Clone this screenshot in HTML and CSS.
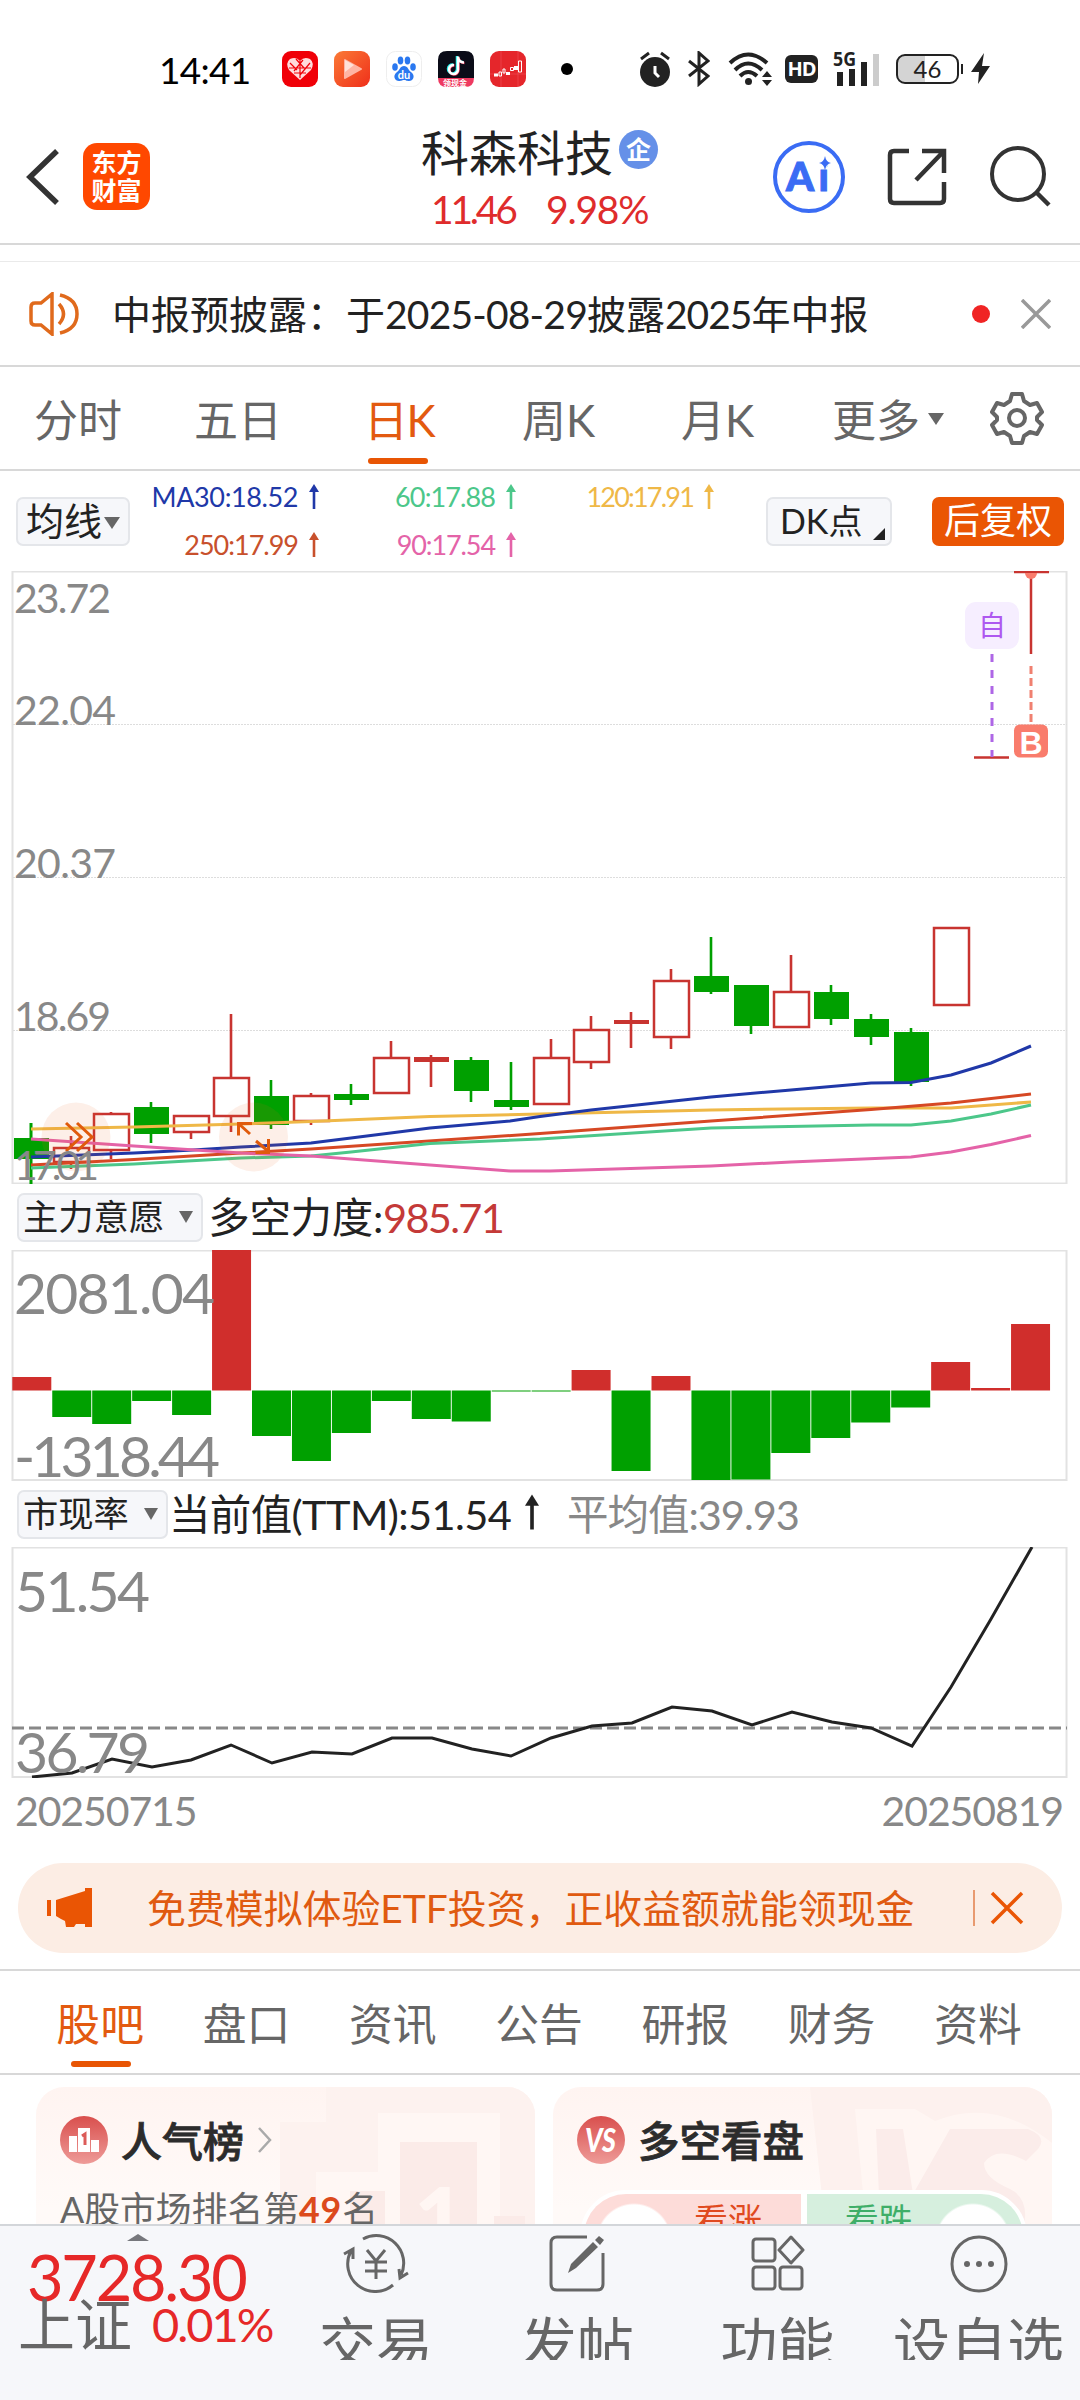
FILE: index.html
```html
<!DOCTYPE html>
<html lang="zh-CN">
<head>
    <meta charset="UTF-8">
    <meta name="viewport" content="width=device-width, initial-scale=1.0">
    <title>科森科技</title>
    <link rel="stylesheet" href="styles.css">
</head>
<body>
    <div class="status-bar">
        <span class="clock">14:41</span>
        <div class="app-icons">
            <svg width="36" height="36" viewBox="0 0 36 36"><rect width="36" height="36" rx="9" fill="#f00008"/><path d="M18 29 L7 19 Q3 12 8 8 Q14 5 18 10 Q22 5 28 8 Q33 12 29 19 Z" fill="#ffdcdc"/><path d="M8 12l7 7M14 8l8 9M21 9l-9 11M28 12l-10 12M12 22h12M7 17h22M18 10v17" stroke="#f00008" stroke-width="1.2"/></svg>
            <svg width="36" height="36" viewBox="0 0 36 36"><defs><linearGradient id="g1" x1="0" y1="0" x2="1" y2="1"><stop offset="0" stop-color="#fb7a36"/><stop offset="1" stop-color="#ef2f1a"/></linearGradient></defs><rect width="36" height="36" rx="9" fill="url(#g1)"/><path d="M11 9 L27 18 L11 27 Z" fill="#ffb5a4" stroke="#ffb5a4" stroke-width="2" stroke-linejoin="round"/><path d="M11 9 L20 14 L11 21 Z" fill="#ffe1d8"/></svg>
            <svg width="36" height="36" viewBox="0 0 36 36"><rect x=".5" y=".5" width="35" height="35" rx="9" fill="#fff" stroke="#eee"/><g fill="#2a78f0"><ellipse cx="9" cy="16" rx="2.800" ry="3.800"/><ellipse cx="14.500" cy="9.500" rx="2.800" ry="4"/><ellipse cx="21.500" cy="9.500" rx="2.800" ry="4"/><ellipse cx="27" cy="16" rx="2.800" ry="3.800"/><path d="M18 15c4 0 4 4 7 6 5 4 2 9-2 9-3 0-3-1-5-1s-2 1-5 1c-4 0-7-5-2-9 3-2 3-6 7-6z"/></g><text x="18" y="28" class="du">du</text></svg>
            <svg width="36" height="36" viewBox="0 0 36 36"><path d="M9 0h18q9 0 9 9v18h-36v-18q0-9 9-9z" fill="#0b0c18"/><path d="M0 27h36q0 9-9 9h-18q-9 0-9-9z" fill="#ee3960"/><path d="M19 5v13a4.500 4.500 0 1 1-4-4.500M19 6c1 4 3 5 6 5" fill="none" stroke="#25f4ee" stroke-width="2.500"/><path d="M20.500 6v13a4.500 4.500 0 1 1-4-4.500M20.500 7c1 4 3 5 6 5" fill="none" stroke="#f03a5c" stroke-width="2.500"/><path d="M20 5.500v13a4.500 4.500 0 1 1-4-4.500M20 6.500c1 4 3 5 6 5" fill="none" stroke="#fff" stroke-width="2.500"/><text x="17" y="34.500" class="cash">领现金</text></svg>
            <svg width="36" height="36" viewBox="0 0 36 36"><rect width="36" height="36" rx="9" fill="#e5262b"/><path d="M11 0v36M0 23h36M28 0v36" stroke="#ef5357" stroke-width=".6"/><path d="M4 22.500h4v3h-4z M16 21h4v3h-4z M24 15h4v4h-4z" fill="#fff"/><path d="M9 21h2.500v4h-2.500z M13 18h2v4h-2z M20.500 16.500h3v3h-3z M28.500 10h3v11h-3z" fill="none" stroke="#fff" stroke-width="1"/></svg>
        </div>
        <span class="dot"></span>
        <svg class="alarm" width="32" height="36" viewBox="0 0 32 36"><circle cx="16" cy="21" r="15" fill="#222"/><path d="M16 15v7l4 4" fill="none" stroke="#fff" stroke-width="3"/><path d="M2 8l8-6M30 8l-8-6" stroke="#222" stroke-width="3"/></svg>
        <svg class="bluetooth" width="22" height="36" viewBox="0 0 22 36"><path d="M1 10l19 15-9 8v-31l9 8-19 15" fill="none" stroke="#222" stroke-width="3"/></svg>
        <svg class="wifi" width="44" height="36" viewBox="0 0 44 36"><g fill="none" stroke="#222" stroke-width="4"><path d="M2 12q18-17 37 0"/><path d="M7 19q13-13 27 0"/><path d="M12 25q8-8 17 0"/></g><circle cx="20.500" cy="30.500" r="3.500" fill="#222"/><path d="M39 20l5 6h-10zM39 35l-5-6h10z" fill="#222"/></svg>
        <span class="hd">HD</span>
        <svg class="signal" width="48" height="36" viewBox="0 0 48 36"><text x="0" y="15" class="five-g" textLength="23" lengthAdjust="spacingAndGlyphs">5G</text><path d="M7 21v14M19 18v17M31 11v24" stroke="#222" stroke-width="6"/><path d="M43 3v32" stroke="#ccc" stroke-width="6"/></svg>
        <span class="battery">46</span>
        <svg class="bolt" width="22" height="32" viewBox="0 0 22 32"><path d="M14 0L1 19h8l-1 12 12-18h-8z" fill="#222"/></svg>
    </div>

    <div class="header">
        <svg width="34" height="56" viewBox="0 0 34 56"><path d="M31 2L4 28l27 26" fill="none" stroke="#333" stroke-width="5.500"/></svg>
        <div class="logo">东方<br>财富</div>
        <div class="stock">
            <div class="name">科森科技<span class="badge">企</span></div>
            <div class="price"><span class="last-price">11.46</span><span>9.98%</span></div>
        </div>
        <div class="tools">
            <svg width="72" height="72" viewBox="0 0 72 72"><circle cx="36" cy="36" r="34" fill="none" stroke="#3a6cf4" stroke-width="4"/><text x="13" y="50" class="ai" textLength="43">Ai</text><circle cx="50" cy="23" r="5" fill="#fff"/><path d="M52 15q1 6 6 7q-5 1-6 7q-1-6-6-7q5-1 6-7z" fill="#3a6cf4"/></svg>
            <svg width="60" height="60" viewBox="0 0 60 60"><path d="M22 4h-15q-4 0-4 4v44q0 4 4 4h46q4 0 4-4v-17M29 33L56 5M35 4h22v22" fill="none" stroke="#333" stroke-width="4.500"/></svg>
            <svg width="62" height="62" viewBox="0 0 62 62"><circle cx="29" cy="28" r="26" fill="none" stroke="#333" stroke-width="4"/><path d="M47 46l13 13" stroke="#333" stroke-width="4.500"/></svg>
        </div>
    </div>

    <div class="notice">
        <svg width="52" height="44" viewBox="0 0 52 44"><g fill="none" stroke="#e06a1c" stroke-width="3.500"><path d="M24 2v40L13 33h-6q-4 0-4-4v-14q0-4 4-4h6z"/><path d="M31 12q9 10 0 20M32 3q17 4 17 19t-17 19"/></g></svg>
        <span class="notice-text">中报预披露：于<span class="n-date">2025-08-29</span>披露<span class="n-year">2025</span>年中报</span>
        <span class="red-dot"></span>
        <svg width="30" height="30" viewBox="0 0 30 30"><path d="M1 1l28 28M29 1L1 29" stroke="#999" stroke-width="3.500"/></svg>
    </div>

    <div class="period-tabs">
        <span>分时</span><span>五日</span><span class="active">日K</span><span>周K</span><span>月K</span><span>更多<i class="caret"></i></span>
        <svg width="54" height="54" viewBox="0 0 54 54"><path d="M22 3h10l2 7 6 4 7-2 5 9-5 5v3l5 5-5 9-7-2-6 4-2 7h-10l-2-7-6-4-7 2-5-9 5-5v-3l-5-5 5-9 7 2 6-4z" fill="none" stroke="#666" stroke-width="4" stroke-linejoin="round"/><circle cx="27" cy="27" r="8" fill="none" stroke="#666" stroke-width="4"/></svg>
    </div>

    <div class="ma-row">
        <div class="select">均线<i class="caret"></i></div>
        <div class="ma-list">
            <span class="ma30">MA30:18.52<svg class="up"><use href="#up"/></svg></span>
            <span class="ma60">60:17.88<svg class="up"><use href="#up"/></svg></span>
            <span class="ma120">120:17.91<svg class="up"><use href="#up"/></svg></span>
            <span class="ma250">250:17.99<svg class="up"><use href="#up"/></svg></span>
            <span class="ma90">90:17.54<svg class="up"><use href="#up"/></svg></span>
        </div>
        <div class="dk">DK点</div>
        <div class="fq">后复权</div>
    </div>
    <svg class="symbols"><symbol id="up" viewBox="0 0 10 25"><path d="M5 25V4" stroke="currentColor" stroke-width="2.600"/><path d="M5 0l5 8h-10z" fill="currentColor"/></symbol></svg>

    <svg class="chart k-chart" viewBox="0 571 1080 613">
        <rect x="12.500" y="571.500" width="1054" height="612" class="frame"/>
        <path d="M13 724.500H1067M13 877.500H1067M13 1030.500H1067" class="grid"/>
        <g id="candles"></g>
        <g id="ma-lines"></g>
        <circle cx="76" cy="1137" r="34.500" class="hint"/>
        <circle cx="253.500" cy="1137" r="34.500" class="hint"/>
        <path d="M66 1123l15 14-15 14M77 1123l15 14-15 14" class="hint-icon"/>
        <path d="M252 1123.500h-13.500v12M239 1124l11 10M256 1141l12 10M268.500 1139v13.500h-13" class="hint-icon"/>
        <path d="M974 757.500h35M1014 572h35M1031 572v82" class="last"/>
        <path d="M1025 573a6 6 0 0 0 12 0z" fill="#f97c6c"/>
        <path d="M992 654V757" class="dash-purple"/>
        <path d="M1031 666V722" class="dash-red"/>
        <rect x="965" y="602" width="54" height="47" rx="11" fill="#f6eeff"/>
        <text x="978" y="636" class="zi">自</text>
        <rect x="1014" y="724.500" width="34" height="33" rx="6" fill="#f97c6c"/>
        <text x="1031" y="753.500" class="buy">B</text>
        <g class="axis">
            <text x="14" y="613" textLength="97">23.72</text>
            <text x="14" y="725" textLength="102">22.04</text>
            <text x="14" y="878" textLength="102">20.37</text>
            <text x="14" y="1031" textLength="97">18.69</text>
            <text x="14" y="1180" textLength="85">17.01</text>
        </g>
    </svg>

    <div class="sub-row">
        <div class="select small">主力意愿<i class="caret"></i></div>
        <span class="value">多空力度:<b class="num-red">985.71</b></span>
    </div>
    <svg class="chart sub-chart" viewBox="0 1250 1080 231">
        <rect x="12.500" y="1250.500" width="1054" height="229.500" class="frame"/>
        <g id="bars"></g>
        <g class="axis big">
            <text x="14" y="1314" textLength="201">2081.04</text>
            <text x="14" y="1477" textLength="206">-1318.44</text>
        </g>
    </svg>

    <div class="sub-row">
        <div class="select small">市现率<i class="caret"></i></div>
        <span class="value ttm">当前值(TTM):51.54<svg class="up"><use href="#up"/></svg></span>
        <span class="value avg">平均值:39.93</span>
    </div>
    <svg class="chart sub-chart" viewBox="0 1547 1080 231">
        <rect x="12.500" y="1547.500" width="1054" height="229.500" class="frame"/>
        <path d="M12 1728H1067" class="avg-line"/>
        <polyline points="32,1777 72,1773 112,1759 152,1767 191,1760 231,1745 272,1763 312,1752 352,1754 392,1738 432,1738 472,1749 511,1756 551,1738 592,1726 632,1723 672,1707 712,1711 752,1725 792,1712 832,1722 871,1728 912,1746 951,1687 991,1619 1032,1547" class="ttm-line"/>
        <g class="axis big">
            <text x="15" y="1612" textLength="135">51.54</text>
            <text x="15" y="1773" textLength="135">36.79</text>
        </g>
    </svg>
    <div class="dates"><span>20250715</span><span>20250819</span></div>

    <div class="banner">
        <svg width="46" height="40" viewBox="0 0 46 40"><path d="M9 12L38 3V0h7v39h-7v-3h-9l-2 3h-8l-1-6-4-2-5-3z" fill="#ea5504"/><path d="M2 12v16" stroke="#ea5504" stroke-width="4"/></svg>
        <span class="banner-text">免费模拟体验ETF投资，正收益额就能领现金</span>
        <i class="divider"></i>
        <svg width="34" height="34" viewBox="0 0 34 34"><path d="M2 2l30 30M32 2L2 32" stroke="#ea5504" stroke-width="3.500"/></svg>
    </div>

    <div class="info-tabs">
        <span class="active">股吧</span><span>盘口</span><span>资讯</span><span>公告</span><span>研报</span><span>财务</span><span>资料</span>
    </div>

    <div class="cards">
        <div class="card">
            <svg class="decor" viewBox="0 0 499 200"><path d="M290 0h209v200h-255v-165h46z" fill="#fdf2ef"/><path d="M342 26h122v174h-184v-115h62z" fill="#fff7f4"/><path d="M364 55h77v145h-77zM314 104h35v96h-35zM458 129h31v71h-31z" fill="#fbebe8"/><text x="378" y="165" class="one">1</text></svg>
            <div class="card-title">
                <svg width="48" height="48" viewBox="0 0 48 48"><use href="#disc"/><path d="M9 20h8v16h-8zM18 12h12v24h-12zM31 24h8v12h-8z" fill="#fff"/><path d="M22 20l3-2v11" fill="none" stroke="#dc5c59" stroke-width="3"/></svg>
                <span>人气榜</span>
                <svg width="14" height="26" viewBox="0 0 14 26"><path d="M1 1l11 12L1 25" fill="none" stroke="#aaa" stroke-width="2.500"/></svg>
            </div>
            <div class="rank">A股市场排名第<b>49</b>名</div>
        </div>
        <div class="card">
            <svg class="decor" viewBox="0 0 499 200"><path d="M257 0h242v200h-220z" fill="#fdf1ee"/><path d="M302 22h60l20 12q60-24 117 22v144h-180z" fill="#fff6f3"/><path d="M323 42h27l10 65 37-65h78q20 8 10 20l-12 12q-30-16-42 2 0 15 26 26 24 12 10 50h-92l-5-25-10 25h-32z" fill="#fbecea"/></svg>
            <div class="card-title">
                <svg width="48" height="48" viewBox="0 0 48 48"><use href="#disc"/><text x="8" y="36" class="vs" textLength="31" lengthAdjust="spacingAndGlyphs">VS</text></svg>
                <span class="wide">多空看盘</span>
            </div>
            <div class="vote"><div class="bull">看涨</div><div class="bear">看跌</div></div>
        </div>
    </div>
    <svg class="symbols"><defs><linearGradient id="g2" x1="0" y1="0" x2="0" y2="1"><stop offset="0" stop-color="#d94f4d"/><stop offset="1" stop-color="#ee9b98"/></linearGradient></defs><symbol id="disc" viewBox="0 0 48 48"><circle cx="24" cy="24" r="24" fill="url(#g2)"/></symbol></svg>

    <div class="bottom-bar">
        <div class="index">
            <i class="tri"></i>
            <div class="points">3728.30</div>
            <div class="change"><span class="sh">上证</span><span class="pct">0.01%</span></div>
        </div>
        <div class="nav">
            <svg width="66" height="60" viewBox="0 0 66 60"><g fill="none" stroke="#666" stroke-width="3"><path d="M20 6A27.500 27.500 0 0 1 58 42M56 36l1 9 8-5M50 52A27.500 27.500 0 0 1 8 18M1 21l9-5v10"/><path d="M24 17l9 11 9-11M33 28v18M22 29h22M22 38h22"/></g></svg>
            <span>交易</span>
        </div>
        <div class="nav">
            <svg width="58" height="60" viewBox="0 0 58 60"><path d="M39 4H9q-6 0-6 6v41q0 6 6 6h40q6 0 6-6V20" fill="none" stroke="#666" stroke-width="3"/><path d="M20 40l3-9L45 9l5 5L28 35zM47 7l4-4 5 4-4 5z" fill="#666"/></svg>
            <span>发帖</span>
        </div>
        <div class="nav">
            <svg width="54" height="60" viewBox="0 0 54 60"><g fill="none" stroke="#666" stroke-width="3"><rect x="2" y="6" width="22" height="22" rx="3"/><path d="M40 4l12 13-12 13-12-13z" stroke-linejoin="round"/><rect x="2" y="34" width="22" height="22" rx="3"/><rect x="29" y="34" width="22" height="22" rx="3"/></g></svg>
            <span>功能</span>
        </div>
        <div class="nav">
            <svg width="60" height="60" viewBox="0 0 60 60"><circle cx="30" cy="31" r="27" fill="none" stroke="#666" stroke-width="3"/><g fill="#666"><circle cx="18" cy="31" r="3"/><circle cx="30" cy="31" r="3"/><circle cx="42" cy="31" r="3"/></g></svg>
            <span>设自选</span>
        </div>
    </div>

    <script>
        const NS = 'http://www.w3.org/2000/svg';
        const RED = '#c83430';
        const GREEN = '#00a000';

        function add(parent, tag, attrs) {
            const el = document.createElementNS(NS, tag);
            for (const key in attrs) el.setAttribute(key, attrs[key]);
            parent.appendChild(el);
        }

        // [up, high, top, bottom, low]
        const candles = [
            [0, 1123, 1138, 1159, 1184], [1, 1136, 1147, 1163, 1169], [1, 1112, 1113, 1151, 1159],
            [0, 1102, 1107, 1134, 1143], [1, 1115, 1115, 1133, 1139], [1, 1014, 1077, 1117, 1132],
            [0, 1080, 1096, 1125, 1129], [1, 1093, 1095, 1122, 1125], [0, 1084, 1094, 1100, 1105],
            [1, 1041, 1057, 1094, 1094], [1, 1055, 1057, 1062, 1087], [0, 1057, 1060, 1091, 1102],
            [0, 1062, 1100, 1107, 1110], [1, 1039, 1057, 1105, 1105], [1, 1016, 1029, 1063, 1069],
            [1, 1012, 1020, 1024, 1048], [1, 969, 980, 1038, 1049], [0, 937, 976, 992, 994],
            [0, 985, 985, 1026, 1034], [1, 955, 991, 1028, 1028], [0, 985, 992, 1019, 1025],
            [0, 1014, 1019, 1037, 1045], [0, 1028, 1032, 1082, 1086], [1, 927, 927, 1006, 1006]
        ];
        const candleBox = document.getElementById('candles');
        candles.forEach(([up, high, top, bottom, low], i) => {
            const x = 31 + i * 40;
            const color = up ? RED : GREEN;
            add(candleBox, 'path', { d: `M${x} ${high}V${top}M${x} ${bottom}V${low}`, stroke: color, 'stroke-width': 2.6 });
            if (up && bottom - top > 6) {
                add(candleBox, 'rect', { x: x - 17, y: top + 1, width: 35, height: bottom - top - 2, fill: 'none', stroke: color, 'stroke-width': 2.5 });
            } else {
                add(candleBox, 'rect', { x: x - 17, y: top, width: 35, height: bottom - top, fill: color });
            }
        });
        add(candleBox, 'path', { d: 'M31 1123V1184', stroke: GREEN, 'stroke-width': 2.6 });

        const lines = {
            '#efb847': '31,1129 134,1127 241,1124 311,1121.5 430,1116.5 540,1114 711,1110 871,1108 951,1108 1031,1102',
            '#2038a8': '31,1157 134,1153 193,1150 241,1147 311,1143 351,1138 430,1128 510,1121 540,1116.5 591,1110 711,1097 791,1090 871,1083 911,1082.5 951,1075 991,1063 1031,1046',
            '#d64824': '31,1165 134,1159.5 241,1153 311,1149 540,1133.5 711,1121 871,1109.5 951,1103 1031,1094',
            '#4cc78a': '31,1168 134,1164 241,1158 311,1156 351,1152 430,1143.5 540,1139 711,1128 871,1125 911,1125 951,1121 991,1114 1031,1105',
            '#e463a8': '31,1139 134,1146 241,1153 311,1156 430,1165 510,1171 550,1171 711,1166 791,1162 911,1157 951,1152 991,1144.5 1031,1135.5'
        };
        for (const color in lines) {
            add(document.getElementById('ma-lines'), 'polyline', { points: lines[color], fill: 'none', stroke: color, 'stroke-width': 3 });
        }

        // end of each bar, measured from the zero line at 1390.5
        const ends = [1377, 1417, 1424, 1401, 1415, 1250, 1436, 1461, 1433, 1401, 1419, 1421.5, 1391.5,
            1391.5, 1370, 1471, 1376, 1480, 1479.5, 1453, 1438, 1422.5, 1407.5, 1362, 1388, 1324];
        ends.forEach((end, i) => {
            add(document.getElementById('bars'), 'rect', {
                x: 12.3 + i * 39.95, y: Math.min(end, 1390.5), width: 39, height: Math.abs(end - 1390.5),
                fill: end < 1390.5 ? '#d02e2c' : GREEN
            });
        });
    </script>
</body>
</html>
```
FILE: styles.css
```css
* {
    box-sizing: border-box;
}
body {
    margin: 0;
    width: 1080px;
    height: 2400px;
    overflow: hidden;
    background: #fff;
    color: #222;
    font-family: Lato, "Noto Sans CJK SC", sans-serif;
    white-space: nowrap;
}
svg {
    display: block;
    flex: none;
}
.symbols {
    position: absolute;
    width: 0;
    height: 0;
}

/* status bar */
.status-bar {
    display: flex;
    align-items: center;
    height: 110px;
    padding: 28px 0 0 159px;
}
.clock {
    width: 123px;
    font-size: 37px;
    letter-spacing: -0.7px;
    color: #000;
}
.app-icons {
    display: flex;
    gap: 16px;
}
.du {
    font: bold 11px Lato, sans-serif;
    fill: #fff;
    text-anchor: middle;
}
.cash {
    font: bold 8px "Noto Sans CJK SC", sans-serif;
    fill: #fff;
    text-anchor: middle;
}
.dot {
    width: 12px;
    height: 12px;
    margin-left: 35px;
    border-radius: 50%;
    background: #000;
}
.alarm {
    margin-left: 66px;
}
.bluetooth {
    margin-left: 17px;
}
.wifi {
    margin-left: 18px;
}
.hd {
    width: 33px;
    height: 28px;
    margin-left: 13px;
    border-radius: 6px;
    background: #222;
    color: #fff;
    font: bold 20px/28px "Open Sans", sans-serif;
    text-align: center;
    letter-spacing: -1px;
}
.signal {
    margin-left: 15px;
}
.five-g {
    font: bold 19px "Open Sans", sans-serif;
    fill: #222;
}
.battery {
    position: relative;
    width: 63px;
    height: 30px;
    margin-left: 15px;
    border: 2.5px solid #222;
    border-radius: 9px;
    background: linear-gradient(90deg, #d4d4d4 46%, #fff 46%);
    font-size: 24px;
    line-height: 26px;
    text-align: center;
}
.battery::after {
    content: "";
    position: absolute;
    right: -6px;
    top: 8px;
    width: 2px;
    height: 10px;
    background: #222;
}
.bolt {
    margin-left: 11px;
}

/* header */
.header {
    display: flex;
    align-items: center;
    height: 135px;
    padding-left: 26px;
    border-bottom: 2px solid #d8d8d8;
}
.logo {
    width: 67px;
    height: 67px;
    margin-left: 23px;
    padding-top: 5px;
    border-radius: 14px;
    background: #ff4800;
    color: #fff;
    font-size: 25px;
    font-weight: bold;
    line-height: 28px;
    text-align: center;
}
.stock {
    width: 380px;
    margin-left: 271px;
}
.name {
    display: flex;
    align-items: center;
    height: 60px;
    font-size: 48px;
}
.badge {
    width: 39px;
    height: 39px;
    margin-left: 6px;
    border-radius: 50%;
    background: #6590e8;
    color: #fff;
    font-size: 25px;
    font-weight: bold;
    line-height: 38px;
    text-align: center;
}
.price {
    display: grid;
    grid-template-columns: 115px 1fr;
    height: 54px;
    padding-left: 10px;
    color: #df2c2c;
    font-size: 39px;
    line-height: 59px;
    letter-spacing: -1.2px;
}
.last-price {
    letter-spacing: -3.2px;
}
.tools {
    display: flex;
    align-items: center;
    margin-left: -28px;
    gap: 42px;
}
.ai {
    font: 900 40px Lato, sans-serif;
    fill: #3a6cf4;
    stroke: #3a6cf4;
    stroke-width: 1;
}

/* notice */
.notice {
    display: flex;
    align-items: center;
    height: 106px;
    margin-top: 16px;
    padding-left: 28px;
    border-top: 1px solid #eaeaea;
    border-bottom: 2px solid #d8d8d8;
}
.notice-text {
    width: 860px;
    margin: -4px 0 0 32px;
    font-size: 39px;
}
.n-date {
    letter-spacing: -0.8px;
}
.n-year {
    letter-spacing: -1px;
}
.red-dot {
    width: 18px;
    height: 18px;
    border-radius: 50%;
    background: #f02424;
}
.notice svg:last-child {
    margin-left: 31px;
}

/* tabs */
.period-tabs {
    display: grid;
    grid-template-columns: 160px 170px 158px 159px 151px 158px 54px;
    align-items: center;
    height: 104px;
    padding-left: 34px;
    border-bottom: 2px solid #d8d8d8;
    color: #666;
    font-size: 44px;
}
.period-tabs span,
.info-tabs span {
    position: relative;
}
.period-tabs .active,
.info-tabs .active {
    color: #e35a10;
}
.period-tabs .active {
    letter-spacing: -1.5px;
}
.active::after {
    content: "";
    position: absolute;
    left: 4px;
    bottom: -14px;
    width: 60px;
    height: 6px;
    border-radius: 3px;
    background: #e85504;
}
.caret {
    display: inline-block;
    margin-left: 8px;
    border-left: 8px solid transparent;
    border-right: 8px solid transparent;
    border-top: 12px solid #666;
    vertical-align: 12px;
}

/* moving averages */
.ma-row {
    display: flex;
    align-items: center;
    height: 100px;
    padding-left: 16px;
}
.select,
.dk {
    width: 114px;
    height: 49px;
    border: 2px solid #e4e6ea;
    border-radius: 7px;
    background: #f6f7fa;
    font-size: 38px;
    line-height: 43px;
    padding-left: 8px;
}
.select .caret {
    margin-left: 2px;
    vertical-align: 6px;
}
.ma-list {
    display: grid;
    grid-template-columns: 189px 197px 198px;
    grid-template-rows: 48px 48px;
    width: 636px;
    margin-top: -2px;
    font-size: 27px;
    letter-spacing: -0.4px;
}
.ma-list span {
    display: flex;
    align-items: center;
    justify-content: flex-end;
}
.up {
    width: 10px;
    height: 25px;
    margin-left: 11px;
}
.ma-list .ma30 { color: #2038a8; }
.ma-list .ma60 { color: #4cc78a; letter-spacing: -0.9px; }
.ma-list .ma120 { color: #efb847; letter-spacing: -1.8px; }
.ma-list .ma250 { color: #c8502c; letter-spacing: -1px; }
.ma-list .ma90 { color: #e463a8; letter-spacing: -1.1px; }
.dk {
    position: relative;
    width: 126px;
    padding-left: 12px;
    font-size: 34px;
}
.dk::after {
    content: "";
    position: absolute;
    right: 5px;
    bottom: 4px;
    border-left: 12px solid transparent;
    border-bottom: 12px solid #222;
}
.fq {
    width: 132px;
    height: 49px;
    margin-left: 40px;
    border-radius: 7px;
    background: #ea5504;
    color: #fff;
    font-size: 36px;
    line-height: 46px;
    text-align: center;
}

/* charts */
.chart {
    width: 1080px;
}
.k-chart {
    height: 613px;
}
.sub-chart {
    height: 231px;
}
.frame {
    fill: none;
    stroke: #e2e2e2;
    stroke-width: 2;
}
.grid {
    stroke: #ddd;
    stroke-dasharray: 2 1;
}
.axis {
    font-size: 41px;
    fill: #888;
}
.axis.big {
    font-size: 57px;
}
.hint {
    fill: #f0641e;
    fill-opacity: 0.1;
}
.hint-icon {
    fill: none;
    stroke: #e05a0c;
    stroke-width: 3;
}
.last {
    stroke: #c83430;
    stroke-width: 2.5;
}
.dash-purple {
    stroke: #ae66e6;
    stroke-width: 3;
    stroke-dasharray: 8 8;
}
.dash-red {
    stroke: #f08070;
    stroke-width: 3;
    stroke-dasharray: 8 4;
}
.zi {
    font-size: 28px;
    fill: #ae58f0;
}
.buy {
    font: bold 32px "Liberation Sans", sans-serif;
    fill: #fff;
    text-anchor: middle;
}
.avg-line {
    stroke: #888;
    stroke-width: 3;
    stroke-dasharray: 12 5;
}
.ttm-line {
    fill: none;
    stroke: #222;
    stroke-width: 3;
}
.sub-row {
    display: flex;
    align-items: center;
    height: 66px;
    padding-left: 17px;
}
.select.small {
    width: auto;
    padding: 0 8px 0 4px;
    font-size: 35.3px;
}
.select.small .caret {
    margin-left: 15px;
    border-left-width: 7px;
    border-right-width: 7px;
    vertical-align: 7px;
}
.value {
    margin: -4px 0 0 5px;
    font-size: 41.5px;
    letter-spacing: -0.3px;
}
.num-red {
    color: #c43a38;
    font-weight: normal;
    letter-spacing: -1.7px;
}
.ttm {
    display: flex;
    align-items: center;
    width: 398px;
    margin-left: 1px;
    letter-spacing: -0.6px;
}
.ttm .up {
    width: 14px;
    height: 36px;
    margin-left: 14px;
}
.avg {
    margin-left: 0;
    color: #888;
    letter-spacing: -1px;
}
.dates {
    display: flex;
    justify-content: space-between;
    height: 85px;
    padding: 8px 17px 0 15px;
    color: #888;
    font-size: 41px;
    letter-spacing: -1.1px;
}

/* promo */
.banner {
    display: flex;
    align-items: center;
    height: 90px;
    margin: 0 18px;
    padding-left: 29px;
    border-radius: 45px;
    background: #fcede4;
    color: #e05a10;
}
.banner-text {
    width: 826px;
    margin: -4px 0 0 54px;
    font-size: 38.9px;
}
.divider {
    width: 2px;
    height: 36px;
    margin-right: 15px;
    background: #e89a70;
}

.info-tabs {
    display: grid;
    grid-template-columns: repeat(7, 146.3px);
    align-items: center;
    height: 106px;
    margin-top: 16px;
    padding-left: 27px;
    border-top: 2px solid #d8d8d8;
    border-bottom: 2px solid #d8d8d8;
    color: #666;
    font-size: 43.8px;
    text-align: center;
}
.info-tabs .active::after {
    left: 44px;
    bottom: -13px;
}

/* cards */
.cards {
    display: flex;
    gap: 18px;
    height: 149px;
    padding: 12px 0 0 36px;
    overflow: hidden;
}
.card {
    position: relative;
    width: 499px;
    height: 200px;
    border-radius: 28px;
    background: linear-gradient(#fff4f1, #fffaf8 60%);
    overflow: hidden;
    flex: none;
}
.decor {
    position: absolute;
    left: 0;
    top: 0;
    width: 499px;
    height: 200px;
}
.one {
    font: 900 90px Lato, sans-serif;
    fill: #fff6f3;
}
.card-title {
    position: relative;
    display: flex;
    align-items: center;
    height: 106px;
    padding-left: 24px;
    color: #2c2c2c;
    font-size: 41px;
    font-weight: 500;
}
.card-title span {
    margin: -3px 14px 0 13px;
    -webkit-text-stroke: 0.8px #2c2c2c;
}
.card-title .wide {
    font-size: 41.5px;
}
.vs {
    font: italic 900 32px Lato, sans-serif;
    fill: #fff;
}
.rank {
    position: relative;
    padding-left: 24px;
    margin-top: -12px;
    font-size: 35.8px;
    color: #666;
}
.rank b {
    color: #dc4a1c;
    letter-spacing: 0.8px;
}
.vote {
    position: relative;
    display: flex;
    gap: 6px;
    width: 447px;
    height: 92px;
    margin: -3px 0 0 27px;
    border: 4px solid #fff;
    border-radius: 46px;
    background: #fff;
    font-size: 34px;
    line-height: 51px;
}
.bull,
.bear {
    width: 217px;
    border-radius: 42px 0 0 42px;
    background: radial-gradient(circle at 50px 47px, #fff 36px, #fddcd9 38px);
    color: #e04a20;
    padding-left: 110px;
}
.bear {
    border-radius: 0 42px 42px 0;
    background: radial-gradient(circle at 166px 47px, #fff 36px, #d6efde 38px);
    color: #3fae68;
    padding-left: 38px;
}

/* bottom bar */
.bottom-bar {
    display: grid;
    grid-template-columns: 275px 202px 200px 201px 201px;
    height: 176px;
    border-top: 2px solid #d3d6da;
    background: #f6f7fa;
    color: #666;
}
.index {
    padding-top: 8px;
}
.tri {
    display: block;
    width: 22px;
    margin-left: 127px;
    border-left: 11px solid transparent;
    border-right: 11px solid transparent;
    border-bottom: 7px solid #76777c;
}
.points {
    height: 58px;
    padding-left: 27px;
    color: #e62828;
    font-size: 63px;
    line-height: 71px;
    letter-spacing: -2.2px;
}
.change {
    display: grid;
    grid-template-columns: 134px 1fr;
    align-items: center;
    height: 50px;
    padding-left: 18px;
}
.sh {
    font-size: 57px;
    line-height: 50px;
}
.pct {
    color: #e62828;
    font-size: 47px;
    letter-spacing: -2px;
    line-height: 50px;
}
.nav {
    display: flex;
    flex-direction: column;
    align-items: center;
    height: 134px;
    padding-top: 7px;
    overflow: hidden;
}
.nav span {
    margin-top: 17px;
    font-size: 57px;
    line-height: 66px;
}
```
